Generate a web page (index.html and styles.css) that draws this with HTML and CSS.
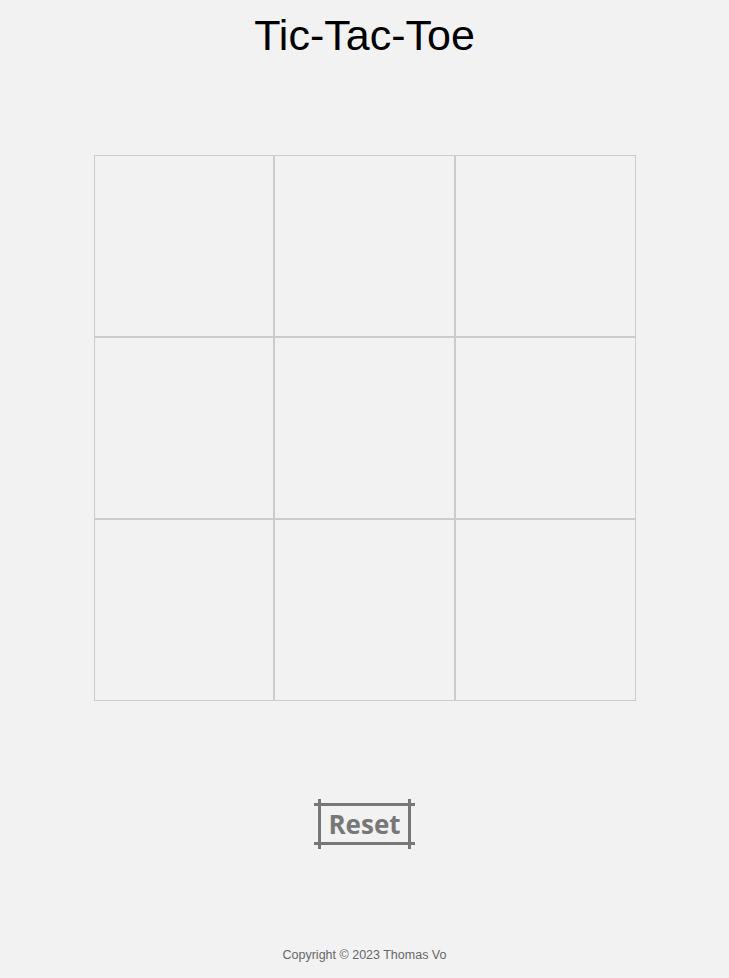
FILE: index.html
```html
<!DOCTYPE html>
<html lang="en">
<head>
<meta charset="utf-8">
<title>Tic-Tac-Toe</title>
<link rel="stylesheet" href="styles.css">
</head>
<body>
<main class="page">
  <h1 class="title">Tic-Tac-Toe</h1>
  <div class="board">
    <div class="cell"></div>
    <div class="cell"></div>
    <div class="cell"></div>
    <div class="cell"></div>
    <div class="cell"></div>
    <div class="cell"></div>
    <div class="cell"></div>
    <div class="cell"></div>
    <div class="cell"></div>
  </div>
  <button class="reset" type="button">Reset</button>
  <footer class="footer">Copyright © 2023 Thomas Vo</footer>
</main>
</body>
</html>
```
FILE: styles.css
```css
html, body {
  margin: 0;
  padding: 0;
  background: #f2f2f2;
}
body {
  font-family: "Liberation Sans", Arial, sans-serif;
}
.page {
  display: flex;
  flex-direction: column;
  align-items: center;
  min-height: 978px;
}
.title {
  margin: 10px 0 0;
  font-size: 43px;
  font-weight: normal;
  line-height: 50px;
  color: #000;
}
.board {
  margin-top: 95px;
  width: 542px;
  display: grid;
  grid-template-columns: repeat(3, 1fr);
  grid-template-rows: repeat(3, 182px);
}
.cell {
  border: 1px solid #cccccc;
  box-sizing: border-box;
}
.reset {
  position: relative;
  margin-top: 102px;
  width: 93px;
  height: 42px;
  box-sizing: border-box;
  border: 3px solid #777777;
  background: transparent;
  color: #777777;
  font-family: "Open Sans", sans-serif;
  font-weight: bold;
  font-size: 26px;
  line-height: 1;
  padding: 0;
  cursor: pointer;
}
.reset::before {
  content: "";
  position: absolute;
  left: -7px;
  right: -7px;
  top: -3px;
  bottom: -3px;
  border-top: 3px solid #777777;
  border-bottom: 3px solid #777777;
}
.reset::after {
  content: "";
  position: absolute;
  left: -3px;
  right: -3px;
  top: -7px;
  bottom: -7px;
  border-left: 3px solid #777777;
  border-right: 3px solid #777777;
}
.footer {
  margin-top: 103px;
  font-size: 12.5px;
  color: #666666;
}
```
